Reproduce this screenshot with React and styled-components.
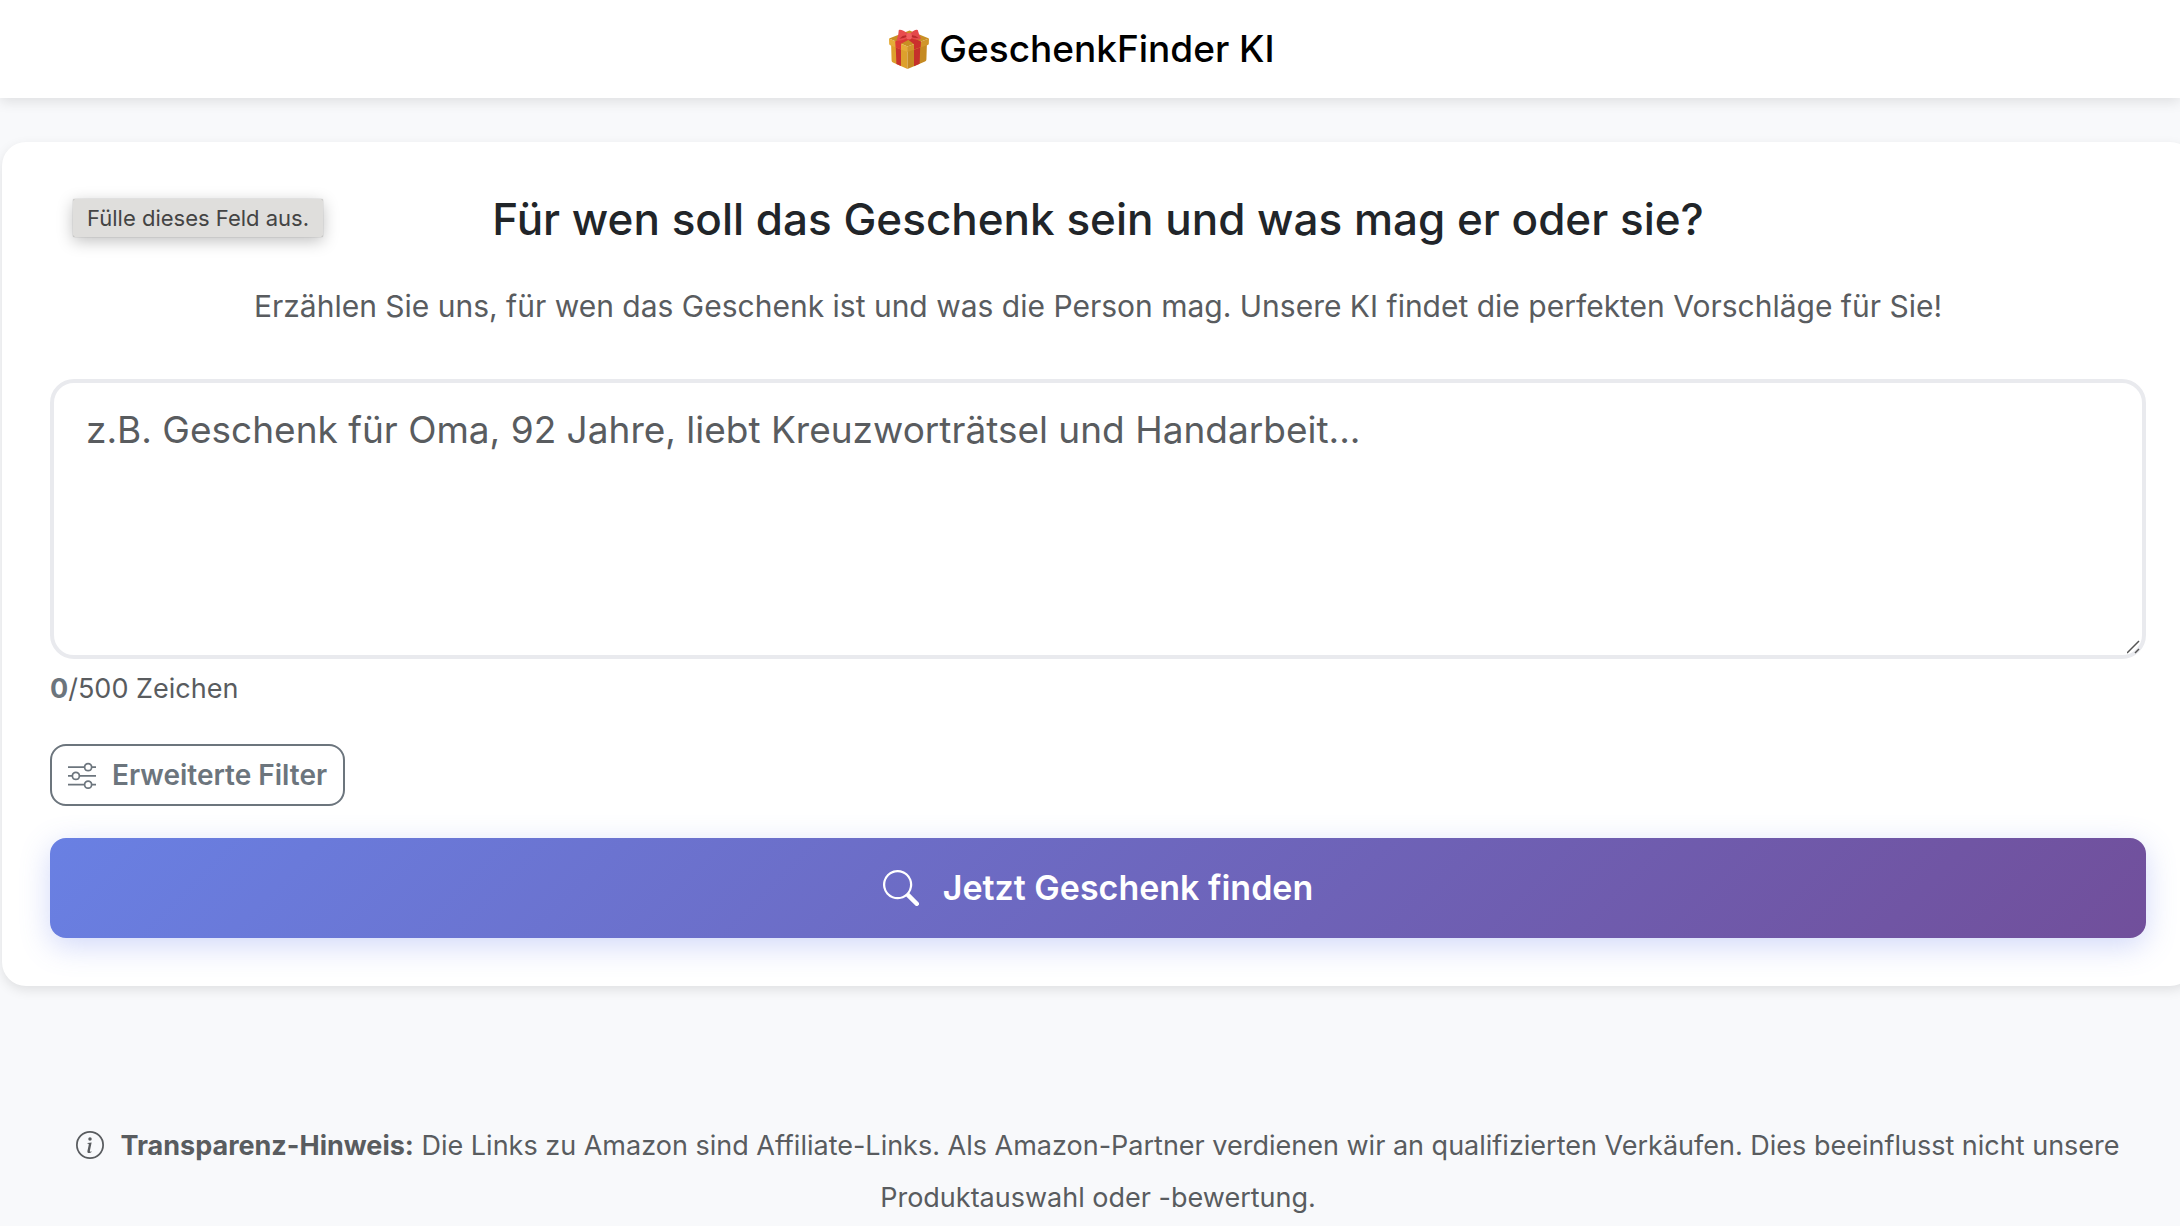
import { useState } from "react";
import styled, { createGlobalStyle } from "styled-components";
import { BsInfoCircle, BsSearch, BsSliders } from "react-icons/bs";
import { clsx } from "clsx";

const MAX_LENGTH = 500;

const GiftIcon = () => (
  <svg viewBox="0 0 40 40" width="40" height="40" aria-hidden="true">
    <path d="M2 12 L18.5 18 V40 L4 33.5 Q2.6 33 2.6 31.5 Z" fill="#dda02c" />
    <path d="M38 12 L18.5 18 V40 L36 32.5 Q37.4 32 37.4 30.5 Z" fill="#c58a22" />
    <path d="M6.6 14 L12 16 V37 L7.4 35 Z" fill="#c9322d" />
    <path d="M31.4 14 L25 16 V37.2 L30.6 34.8 Z" fill="#c52f2b" />
    <path d="M0 9.6 L20.5 1.5 L40 9.6 L18.5 17.6 Z" fill="#c98f24" />
    <path d="M0 9.6 L18.5 17.6 V23 L1.2 16.2 Q0.3 15.8 0.2 15 Z" fill="#e5ac38" />
    <path d="M40 9.6 L18.5 17.6 V23 L38.8 16 Q39.7 15.6 39.8 14.8 Z" fill="#d0962b" />
    <path d="M6.2 12.2 L17 7.5 L22 9.5 L12 14.8 V20.4 L6.6 18.4 Z" fill="#dc3a36" />
    <path d="M32 12.6 L23 8.5 L18 9.8 L25 15.2 V20.6 L31.6 18.2 Z" fill="#cb302d" />
    <path
      d="M19 4.6 Q13.5 0.4 10.4 0.8 Q9.4 1 9.6 2.6 Q9.6 6.5 7.8 10.6 Q7.6 11.8 9 11.7 Q15 11.4 19 8.8 Z"
      fill="#e84c4d"
    />
    <path
      d="M21 4.6 Q25.5 0.4 28 0.8 Q29.2 1 29.2 2.4 Q30 6 31.8 8.8 Q32 10.4 30.6 10.6 Q25.5 11 21 8.8 Z"
      fill="#e4484a"
    />
    <path d="M18 6.4 Q14 5.8 10.4 9.8 Q15 9.4 18 7.8 Z" fill="#b92a2b" />
    <path d="M22 6.4 Q26 5.6 29.4 9 Q25 9.4 22 7.8 Z" fill="#b92a2b" />
    <rect x="17.4" y="4" width="5.4" height="6.4" rx="2.2" fill="#f0605f" />
  </svg>
);

const App = () => {
  const [description, setDescription] = useState("");

  return (
    <>
      <GlobalStyle />
      <Header>
        <Brand href="/">
          <GiftIcon />
          GeschenkFinder KI
        </Brand>
      </Header>

      <main>
        <Card>
          <Tooltip role="tooltip">Fülle dieses Feld aus.</Tooltip>
          <form onSubmit={(e) => e.preventDefault()}>
            <Heading>
              <label htmlFor="description">
                Für wen soll das Geschenk sein und was mag er oder sie?
              </label>
            </Heading>
            <Lead>
              Erzählen Sie uns, für wen das Geschenk ist und was die Person mag.
              Unsere KI findet die perfekten Vorschläge für Sie!
            </Lead>
            <Description
              id="description"
              maxLength={MAX_LENGTH}
              placeholder="z.B. Geschenk für Oma, 92 Jahre, liebt Kreuzworträtsel und Handarbeit..."
              value={description}
              onChange={(e) => setDescription(e.target.value)}
            />
            <Counter className={clsx(description.length === MAX_LENGTH && "full")}>
              <strong>{description.length}</strong>/{MAX_LENGTH} Zeichen
            </Counter>
            <FilterButton type="button">
              <BsSliders size={28} />
              Erweiterte Filter
            </FilterButton>
            <SubmitButton type="submit">
              <BsSearch size={36} />
              Jetzt Geschenk finden
            </SubmitButton>
          </form>
        </Card>
      </main>

      <Footer>
        <BsInfoCircle size={28} />
        <strong>Transparenz-Hinweis:</strong> Die Links zu Amazon sind
        Affiliate-Links. Als Amazon-Partner verdienen wir an qualifizierten
        Verkäufen. Dies beeinflusst nicht unsere Produktauswahl oder -bewertung.
      </Footer>
    </>
  );
};

const GlobalStyle = createGlobalStyle`
  *,
  *::before,
  *::after {
    box-sizing: border-box;
  }

  body {
    margin: 0;
    overflow-x: hidden;

    background: #f8f9fb;
    color: #212529;

    font-family: Inter, "Liberation Sans", sans-serif;
    font-size: 27px;
    line-height: 42px;
  }
`;

const Header = styled.header`
  padding: 19px 16px 19px 0;
  display: flex;
  justify-content: center;

  background: white;
  box-shadow: 0 4px 12px rgba(0, 0, 0, 0.1);
`;

const Brand = styled.a`
  display: flex;
  align-items: center;
  gap: 10px;

  font-size: 37px;
  font-weight: 500;
  line-height: 60px;

  color: black;
  text-decoration: none;
`;

const Card = styled.section`
  position: relative;
  margin: 44px -14px 0 2px;
  padding: 48px;

  background: white;
  border-radius: 24px;
  box-shadow: 0 4px 12px rgba(0, 0, 0, 0.1);
`;

const Tooltip = styled.div`
  position: absolute;
  top: 57px;
  left: 71px;
  padding: 4px 14px;

  font-size: 22px;
  line-height: 30px;

  background: #dfdedc;
  color: #444444;
  border-radius: 2px;
  box-shadow: 0 0 1px rgba(0, 0, 0, 0.5), 0 4px 16px rgba(0, 0, 0, 0.25);
`;

const Heading = styled.h1`
  margin: 0 0 34px;

  font-size: 44px;
  font-weight: 500;
  line-height: 58px;
  text-align: center;
`;

const Lead = styled.p`
  margin: 0 0 49px;

  font-size: 30px;
  line-height: 48px;
  text-align: center;

  color: #595c5f;
`;

const Description = styled.textarea`
  display: block;
  width: 100%;
  height: 280px;
  padding: 17px 32px;

  font: inherit;
  font-size: 37px;
  line-height: 60px;

  background: white;
  color: inherit;
  border: 4px solid #e9eaee;
  border-radius: 24px;
  resize: vertical;

  &::placeholder {
    color: #595c5f;
    opacity: 1;
  }

  &::-webkit-resizer {
    background: url("data:image/svg+xml,%3Csvg xmlns='http://www.w3.org/2000/svg' viewBox='0 0 15 15'%3E%3Cpath d='M0 13L12 1M8 13L12 9' stroke='%23555' stroke-width='1.5'/%3E%3C/svg%3E")
      no-repeat;
  }
`;

const Counter = styled.div`
  margin: 9px 0 34px;

  color: #595c5f;

  strong {
    color: #6c757d;
  }

  &.full strong {
    color: #dc3545;
  }
`;

const FilterButton = styled.button`
  display: flex;
  align-items: center;
  gap: 16px;
  padding: 8px 16px;

  font: inherit;
  font-size: 28px;
  font-weight: 600;
  line-height: 42px;

  background: transparent;
  color: #6c757d;
  border: 2px solid #6c757d;
  border-radius: 16px;
  cursor: pointer;
`;

const SubmitButton = styled.button`
  display: flex;
  align-items: center;
  justify-content: center;
  gap: 24px;
  width: 100%;
  margin-top: 32px;
  padding: 23px;

  font: inherit;
  font-size: 34px;
  font-weight: 600;
  line-height: 54px;

  background: linear-gradient(135deg, #6980e3 0%, #714f9b 100%);
  color: white;
  border: none;
  border-radius: 16px;
  box-shadow: 0 8px 30px rgba(102, 126, 234, 0.3);
  cursor: pointer;
`;

const Footer = styled.footer`
  margin: 134px 0 0 16px;
  padding: 0 48px;

  line-height: 52px;
  text-align: center;

  color: #595c5f;

  svg {
    margin-right: 16px;
    vertical-align: -4px;
  }
`;

export default App;
